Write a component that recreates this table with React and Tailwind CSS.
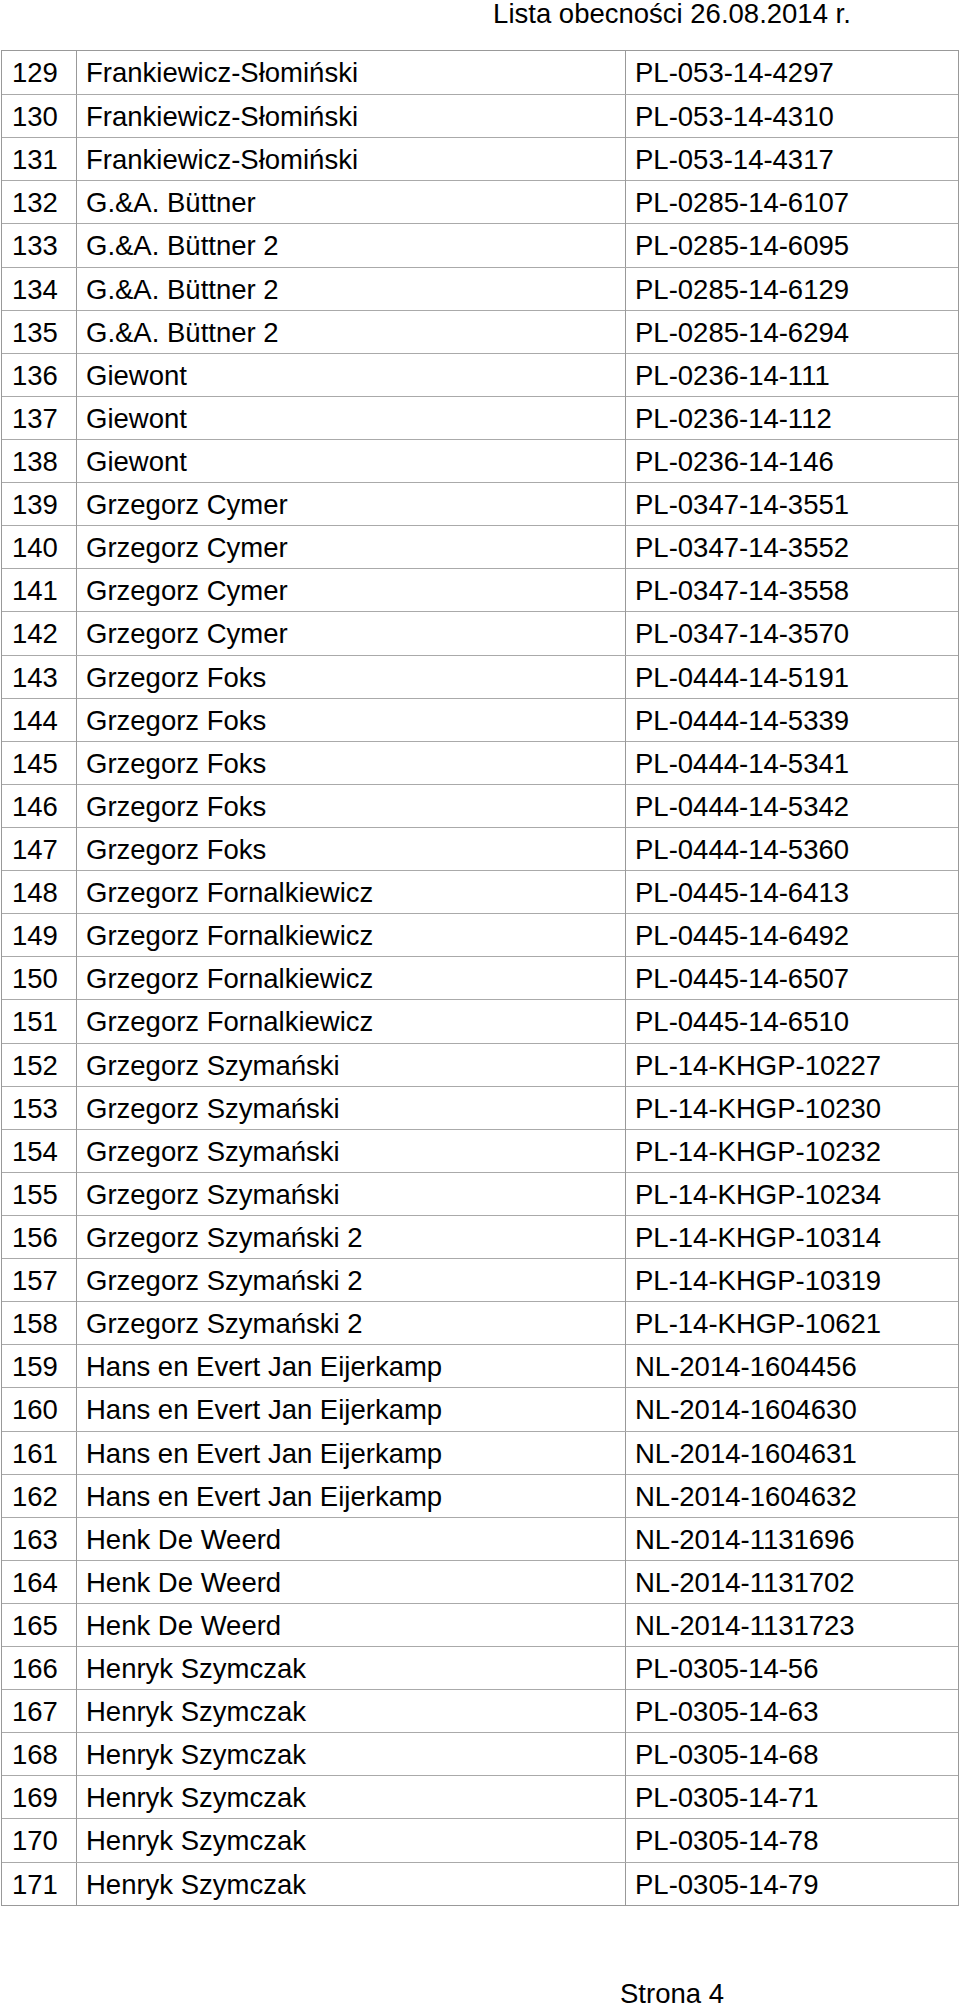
import React from 'react';

// Lista obecności - strona 4 (pozycje 129-171)
const rows = [
  [129, 'Frankiewicz-Słomiński', 'PL-053-14-4297'],
  [130, 'Frankiewicz-Słomiński', 'PL-053-14-4310'],
  [131, 'Frankiewicz-Słomiński', 'PL-053-14-4317'],
  [132, 'G.&A. Büttner', 'PL-0285-14-6107'],
  [133, 'G.&A. Büttner 2', 'PL-0285-14-6095'],
  [134, 'G.&A. Büttner 2', 'PL-0285-14-6129'],
  [135, 'G.&A. Büttner 2', 'PL-0285-14-6294'],
  [136, 'Giewont', 'PL-0236-14-111'],
  [137, 'Giewont', 'PL-0236-14-112'],
  [138, 'Giewont', 'PL-0236-14-146'],
  [139, 'Grzegorz Cymer', 'PL-0347-14-3551'],
  [140, 'Grzegorz Cymer', 'PL-0347-14-3552'],
  [141, 'Grzegorz Cymer', 'PL-0347-14-3558'],
  [142, 'Grzegorz Cymer', 'PL-0347-14-3570'],
  [143, 'Grzegorz Foks', 'PL-0444-14-5191'],
  [144, 'Grzegorz Foks', 'PL-0444-14-5339'],
  [145, 'Grzegorz Foks', 'PL-0444-14-5341'],
  [146, 'Grzegorz Foks', 'PL-0444-14-5342'],
  [147, 'Grzegorz Foks', 'PL-0444-14-5360'],
  [148, 'Grzegorz Fornalkiewicz', 'PL-0445-14-6413'],
  [149, 'Grzegorz Fornalkiewicz', 'PL-0445-14-6492'],
  [150, 'Grzegorz Fornalkiewicz', 'PL-0445-14-6507'],
  [151, 'Grzegorz Fornalkiewicz', 'PL-0445-14-6510'],
  [152, 'Grzegorz Szymański', 'PL-14-KHGP-10227'],
  [153, 'Grzegorz Szymański', 'PL-14-KHGP-10230'],
  [154, 'Grzegorz Szymański', 'PL-14-KHGP-10232'],
  [155, 'Grzegorz Szymański', 'PL-14-KHGP-10234'],
  [156, 'Grzegorz Szymański 2', 'PL-14-KHGP-10314'],
  [157, 'Grzegorz Szymański 2', 'PL-14-KHGP-10319'],
  [158, 'Grzegorz Szymański 2', 'PL-14-KHGP-10621'],
  [159, 'Hans en Evert Jan Eijerkamp', 'NL-2014-1604456'],
  [160, 'Hans en Evert Jan Eijerkamp', 'NL-2014-1604630'],
  [161, 'Hans en Evert Jan Eijerkamp', 'NL-2014-1604631'],
  [162, 'Hans en Evert Jan Eijerkamp', 'NL-2014-1604632'],
  [163, 'Henk De Weerd', 'NL-2014-1131696'],
  [164, 'Henk De Weerd', 'NL-2014-1131702'],
  [165, 'Henk De Weerd', 'NL-2014-1131723'],
  [166, 'Henryk Szymczak', 'PL-0305-14-56'],
  [167, 'Henryk Szymczak', 'PL-0305-14-63'],
  [168, 'Henryk Szymczak', 'PL-0305-14-68'],
  [169, 'Henryk Szymczak', 'PL-0305-14-71'],
  [170, 'Henryk Szymczak', 'PL-0305-14-78'],
  [171, 'Henryk Szymczak', 'PL-0305-14-79'],
];

const App = () => {
  return (
    <div className="w-[960px] bg-white text-black font-['Liberation_Sans',Arial,sans-serif]">
      {/* Header */}
      <div className="h-[50px] pl-[384px] flex justify-center">
        <div className="text-[27.5px] leading-[27px] whitespace-nowrap">
          Lista obecności 26.08.2014 r.
        </div>
      </div>

      {/* Table */}
      <div className="ml-[1px] w-[958px] border border-[#999]">
        {rows.map(([nr, name, code], i) => (
          <div
            key={nr}
            className={`grid grid-cols-[74px_549px_1fr] h-[43.12px] box-border text-[27.5px] leading-[43px] ${
              i === 0 ? '' : 'border-t border-[#aaa]'
            }`}
          >
            <div className="pl-[10px] whitespace-nowrap">{nr}</div>
            <div className="pl-[9px] border-l border-[#999] whitespace-nowrap">{name}</div>
            <div className="pl-[9px] border-l border-[#999] whitespace-nowrap">{code}</div>
          </div>
        ))}
      </div>

      {/* Footer */}
      <div className="mt-[74px] pl-[384px] flex justify-center">
        <div className="text-[27.5px] leading-[27px] whitespace-nowrap">Strona 4</div>
      </div>
    </div>
  );
};

export default App;
